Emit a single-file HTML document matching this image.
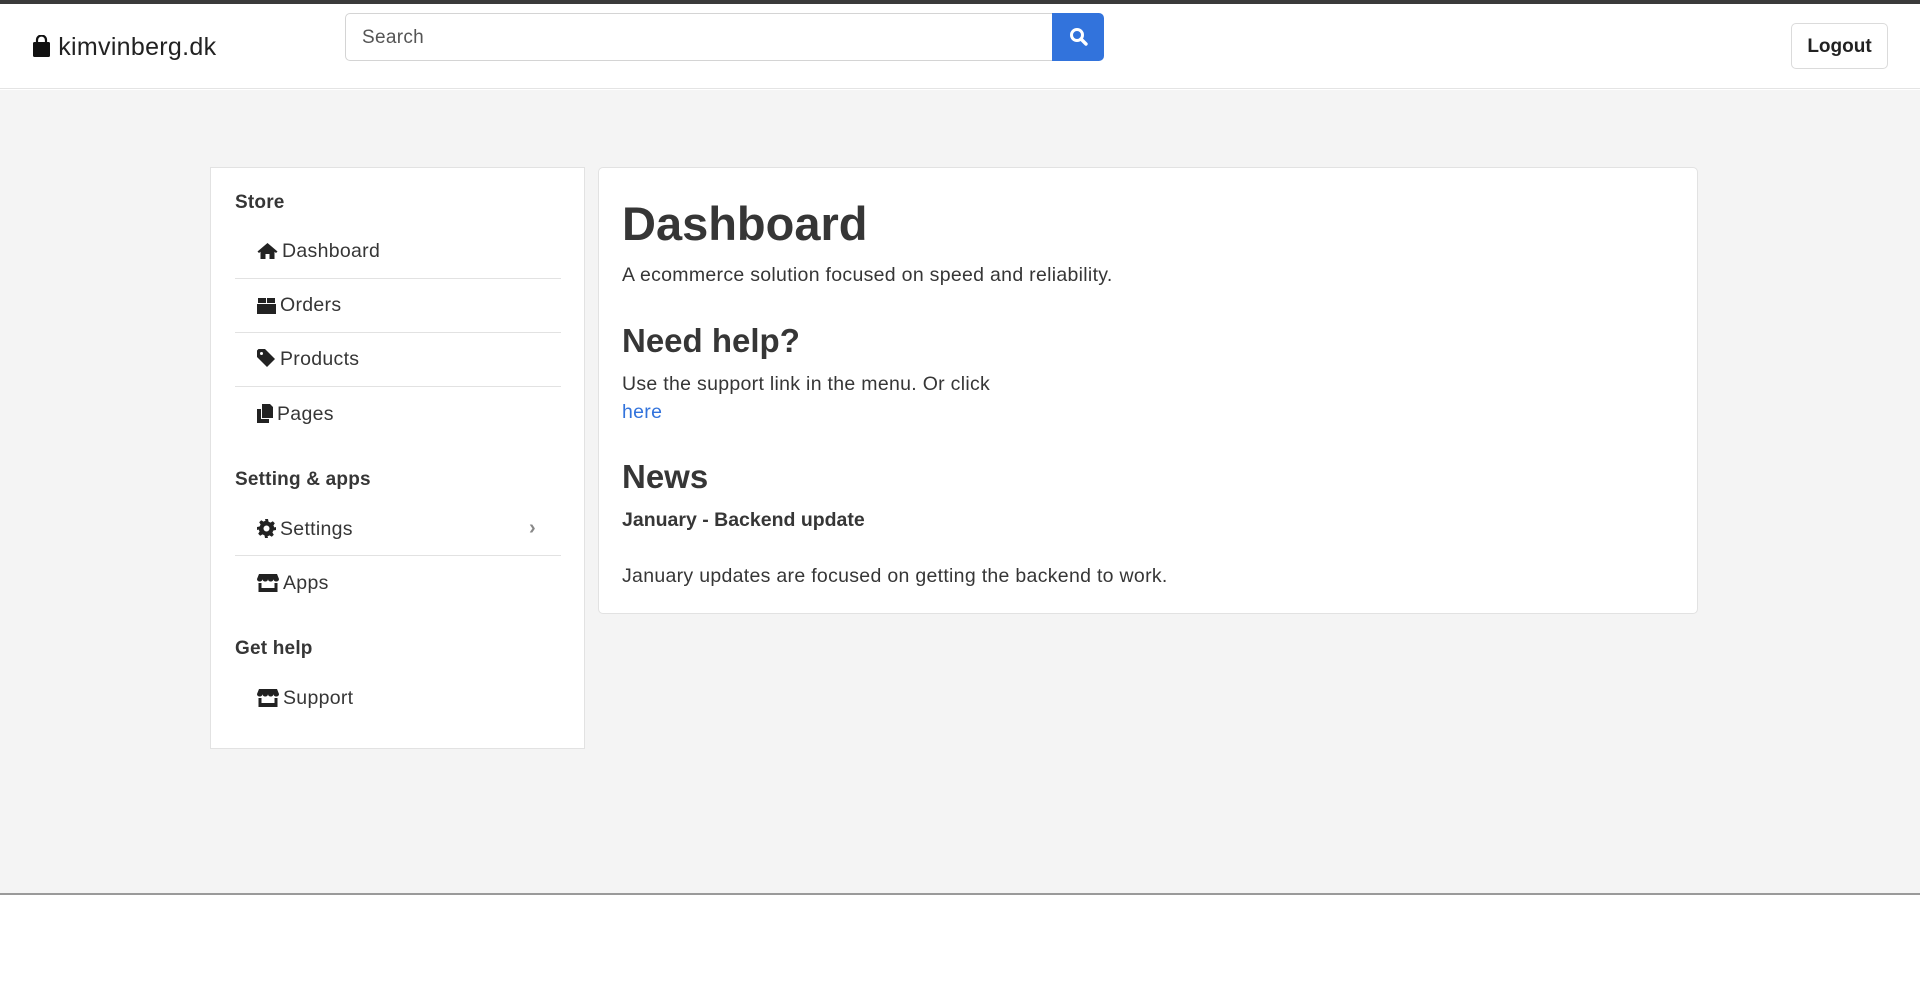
<!DOCTYPE html>
<html><head><meta charset="utf-8"><style>
*{margin:0;padding:0;box-sizing:border-box}
body{width:1920px;height:1007px;position:relative;background:#fff;font-family:"Liberation Sans",Arial,sans-serif;color:#363636;overflow:hidden}
.a{position:absolute;white-space:nowrap}
.top{left:0;top:0;width:1920px;height:4px;background:#3a3a3a}
.hdr{left:0;top:4px;width:1920px;height:85px;background:#fff;border-bottom:1px solid #e4e4e4}
.main{left:0;top:90px;width:1920px;height:805px;background:#f4f4f4;border-bottom:2px solid #9a9a9a}
.search{left:345px;top:13px;width:708px;height:48px;border:1px solid #d4d4d4;border-radius:5px 0 0 5px;background:#fff;font-size:19px;color:#555;padding:13px 16px;letter-spacing:0.3px}
.btn{left:1052px;top:13px;width:52px;height:48px;background:#3273dc;border-radius:0 5px 5px 0}
.logout{left:1791px;top:23px;width:97px;height:46px;border:1px solid #dbdbdb;border-radius:5px;background:#fff;font-weight:bold;font-size:19px;text-align:center;line-height:46px;color:#222}
.side{left:210px;top:167px;width:375px;height:582px;background:#fff;border:1px solid #e2e2e2}
.card{left:598px;top:167px;width:1100px;height:447px;background:#fff;border:1px solid #e2e2e2;border-radius:5px}
.lbl{font-weight:bold;font-size:19px;color:#363636;letter-spacing:0.2px}
.it{font-size:19.5px;color:#363636;line-height:24px;letter-spacing:0.3px}
.div{left:235px;width:326px;height:1px;background:#e2e2e2}
.it svg{vertical-align:-3px;margin-right:4px}
</style></head><body>
<div class="a top"></div>
<div class="a hdr"></div>
<div class="a" style="left:32px;top:33px;font-size:25px;color:#222;line-height:28px;letter-spacing:0.3px">
<svg width="19" height="22" viewBox="0 0 19 22" style="vertical-align:-2px"><path d="M5 7V5a4.5 4.5 0 0 1 9 0v2" fill="none" stroke="#111" stroke-width="2.2"/><rect x="1" y="7" width="17" height="15" rx="1.5" fill="#111"/></svg> kimvinberg.dk</div>
<div class="a search">Search</div>
<div class="a btn"><svg width="52" height="48" viewBox="0 0 52 48"><circle cx="25" cy="22" r="5.5" fill="none" stroke="#fff" stroke-width="3"/><path d="M29 26l5 5" stroke="#fff" stroke-width="3.4" stroke-linecap="round"/></svg></div>
<div class="a logout">Logout</div>
<div class="a main"></div>
<div class="a side"></div>
<div class="a lbl" style="left:235px;top:192px">Store</div>
<div class="a it" style="left:257px;top:239px"><svg width="21" height="18" viewBox="0 0 21 18"><path d="M10.5 1L0.5 9.5l1.5 1.5L3.5 9.8V17h5v-5h4v5h5V9.8l1.5 1.2 1.5-1.5z" fill="#222"/></svg>Dashboard</div>
<div class="a div" style="top:278px"></div>
<div class="a it" style="left:257px;top:293px"><svg width="19" height="17" viewBox="0 0 19 17"><path d="M1 1h8v5H1zM10 1h8v5h-8zM0 7h19v10H0z" fill="#222"/></svg>Orders</div>
<div class="a div" style="top:332px"></div>
<div class="a it" style="left:257px;top:347px"><svg width="19" height="19" viewBox="0 0 19 19"><path d="M0 1.5V8l10 10 8-8L8 0H1.5zM4.5 3a1.5 1.5 0 1 1 0 3 1.5 1.5 0 0 1 0-3z" fill="#222" fill-rule="evenodd"/></svg>Products</div>
<div class="a div" style="top:386px"></div>
<div class="a it" style="left:257px;top:402px"><svg width="16" height="19" viewBox="0 0 16 19"><path d="M5 0h8l3 3v11H5zM0 5h4v10h8v4H0z" fill="#222"/></svg>Pages</div>
<div class="a lbl" style="left:235px;top:469px">Setting &amp; apps</div>
<div class="a it" style="left:257px;top:517px"><svg width="19" height="19" viewBox="0 0 19 19"><path d="M8 0h3l.5 2.6 2 1 2.3-1.4 2 2-1.4 2.3 1 2L19 8v3l-2.6.5-1 2 1.4 2.3-2 2-2.3-1.4-2 1L11 19H8l-.5-2.6-2-1-2.3 1.4-2-2 1.4-2.3-1-2L0 11V8l2.6-.5 1-2L2.2 3.2l2-2 2.3 1.4 2-1zM9.5 6.5a3 3 0 1 0 0 6 3 3 0 0 0 0-6z" fill="#222" fill-rule="evenodd"/></svg>Settings</div>
<div class="a" style="left:529px;top:517px;font-size:20px;color:#888;font-weight:bold">›</div>
<div class="a div" style="top:555px"></div>
<div class="a it" style="left:257px;top:571px"><svg width="22" height="18" viewBox="0 0 22 18"><path d="M2 0h18l2 5c0 1.5-1.2 2.5-2.7 2.5S16.5 6.5 16.5 5c0 1.5-1.3 2.5-2.8 2.5S11 6.5 11 5c0 1.5-1.2 2.5-2.7 2.5S5.5 6.5 5.5 5c0 1.5-1.3 2.5-2.8 2.5S0 6.5 0 5zM1.5 9h3v5h13V9h3v9h-19z" fill="#222"/></svg>Apps</div>
<div class="a lbl" style="left:235px;top:638px">Get help</div>
<div class="a it" style="left:257px;top:686px"><svg width="22" height="18" viewBox="0 0 22 18"><path d="M2 0h18l2 5c0 1.5-1.2 2.5-2.7 2.5S16.5 6.5 16.5 5c0 1.5-1.3 2.5-2.8 2.5S11 6.5 11 5c0 1.5-1.2 2.5-2.7 2.5S5.5 6.5 5.5 5c0 1.5-1.3 2.5-2.8 2.5S0 6.5 0 5zM1.5 9h3v5h13V9h3v9h-19z" fill="#222"/></svg>Support</div>
<div class="a card"></div>
<div class="a" style="left:622px;top:194px;font-size:47px;font-weight:bold;color:#363636;line-height:60px">Dashboard</div>
<div class="a it" style="left:622px;top:263px">A ecommerce solution focused on speed and reliability.</div>
<div class="a" style="left:622px;top:320px;font-size:33px;font-weight:bold;color:#363636;line-height:42px">Need help?</div>
<div class="a it" style="left:622px;top:372px">Use the support link in the menu. Or click</div>
<div class="a it" style="left:622px;top:400px;color:#3273dc">here</div>
<div class="a" style="left:622px;top:456px;font-size:33px;font-weight:bold;color:#363636;line-height:42px">News</div>
<div class="a it" style="left:622px;top:508px;font-weight:bold;letter-spacing:0">January - Backend update</div>
<div class="a it" style="left:622px;top:564px">January updates are focused on getting the backend to work.</div>
</body></html>
